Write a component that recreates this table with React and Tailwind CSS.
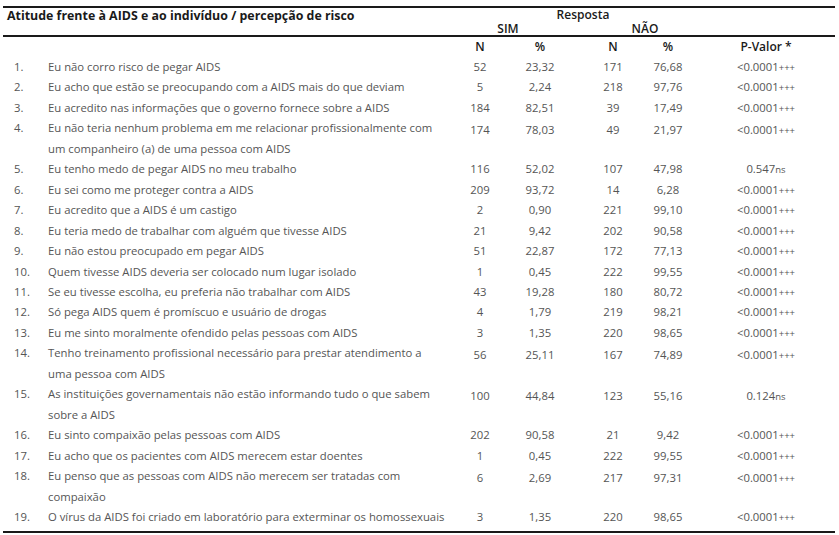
const rows = [
  ["1.", ["Eu não corro risco de pegar AIDS"], "52", "23,32", "171", "76,68", "<0.0001", "+++"],
  ["2.", ["Eu acho que estão se preocupando com a AIDS mais do que deviam"], "5", "2,24", "218", "97,76", "<0.0001", "+++"],
  ["3.", ["Eu acredito nas informações que o governo fornece sobre a AIDS"], "184", "82,51", "39", "17,49", "<0.0001", "+++"],
  ["4.", ["Eu não teria nenhum problema em me relacionar profissionalmente com", "um companheiro (a) de uma pessoa com AIDS"], "174", "78,03", "49", "21,97", "<0.0001", "+++"],
  ["5.", ["Eu tenho medo de pegar AIDS no meu trabalho"], "116", "52,02", "107", "47,98", "0.547", "ns"],
  ["6.", ["Eu sei como me proteger contra a AIDS"], "209", "93,72", "14", "6,28", "<0.0001", "+++"],
  ["7.", ["Eu acredito que a AIDS é um castigo"], "2", "0,90", "221", "99,10", "<0.0001", "+++"],
  ["8.", ["Eu teria medo de trabalhar com alguém que tivesse AIDS"], "21", "9,42", "202", "90,58", "<0.0001", "+++"],
  ["9.", ["Eu não estou preocupado em pegar AIDS"], "51", "22,87", "172", "77,13", "<0.0001", "+++"],
  ["10.", ["Quem tivesse AIDS deveria ser colocado num lugar isolado"], "1", "0,45", "222", "99,55", "<0.0001", "+++"],
  ["11.", ["Se eu tivesse escolha, eu preferia não trabalhar com AIDS"], "43", "19,28", "180", "80,72", "<0.0001", "+++"],
  ["12.", ["Só pega AIDS quem é promíscuo e usuário de drogas"], "4", "1,79", "219", "98,21", "<0.0001", "+++"],
  ["13.", ["Eu me sinto moralmente ofendido pelas pessoas com AIDS"], "3", "1,35", "220", "98,65", "<0.0001", "+++"],
  ["14.", ["Tenho treinamento profissional necessário para prestar atendimento a", "uma pessoa com AIDS"], "56", "25,11", "167", "74,89", "<0.0001", "+++"],
  ["15.", ["As instituições governamentais não estão informando tudo o que sabem", "sobre a AIDS"], "100", "44,84", "123", "55,16", "0.124", "ns"],
  ["16.", ["Eu sinto compaixão pelas pessoas com AIDS"], "202", "90,58", "21", "9,42", "<0.0001", "+++"],
  ["17.", ["Eu acho que os pacientes com AIDS merecem estar doentes"], "1", "0,45", "222", "99,55", "<0.0001", "+++"],
  ["18.", ["Eu penso que as pessoas com AIDS não merecem ser tratadas com", "compaixão"], "6", "2,69", "217", "97,31", "<0.0001", "+++"],
  ["19.", ["O vírus da AIDS foi criado em laboratório para exterminar os homossexuais"], "3", "1,35", "220", "98,65", "<0.0001", "+++"],
];

function Row({ r }) {
  const [num, lines, n1, p1, n2, p2, pv, sig] = r;
  const multi = lines.length > 1;
  return (
    <div className="flex items-start leading-[20.45px]">
      <div className="w-[45px] pl-[11px]">{num}</div>
      <div className="w-[402px]">
        {lines.map((l) => (
          <div key={l} className="whitespace-nowrap">{l}</div>
        ))}
      </div>
      <div className={`w-[60px] text-center ${multi ? "pt-[2px]" : ""}`}>{n1}</div>
      <div className={`w-[60px] text-center ${multi ? "pt-[2px]" : ""}`}>{p1}</div>
      <div className={`ml-[13px] w-[60px] text-center ${multi ? "pt-[2px]" : ""}`}>{n2}</div>
      <div className={`w-[50px] text-center ${multi ? "pt-[2px]" : ""}`}>{p2}</div>
      <div className={`ml-[4px] flex-1 text-center ${multi ? "pt-[2px]" : ""}`}>
        {pv}
        <span className="text-[9.5px] leading-none">{sig}</span>
      </div>
    </div>
  );
}

export default function App() {
  return (
    <div className="h-[535px] w-[839px] bg-white pt-[6px] font-['Open_Sans',sans-serif] text-[11.3px] text-[#555]">
      <div className="ml-[3px] w-[832px]">
        <div className="h-[2px] bg-[#1a1a1a]" />
        <div className="flex h-[27px] text-[#1a1a1a] font-semibold">
          <div className="w-[447px] pl-[4px] text-[12.4px] font-bold leading-[15px] whitespace-nowrap">
            Atitude frente à AIDS e ao indivíduo / percepção de risco
          </div>
          <div className="flex-1 text-[12px] leading-[14px]">
            <div className="w-[266px] text-center">Resposta</div>
            <div className="flex">
              <div className="w-[116px] text-center">SIM</div>
              <div className="w-[158px] text-center">NÃO</div>
            </div>
          </div>
        </div>
        <div className="h-[2px] bg-[#1a1a1a]" />
        <div className="flex h-[20px] items-center text-[12px] font-semibold text-[#1a1a1a]">
          <div className="w-[447px]" />
          <div className="w-[60px] text-center">N</div>
          <div className="w-[60px] text-center">%</div>
          <div className="ml-[13px] w-[60px] text-center">N</div>
          <div className="w-[50px] text-center">%</div>
          <div className="ml-[4px] flex-1 text-center">P-Valor *</div>
        </div>
        <div className="pb-[4px]">
          {rows.map((r) => (
            <Row key={r[0]} r={r} />
          ))}
        </div>
        <div className="h-[2px] bg-[#1a1a1a]" />
      </div>
    </div>
  );
}
